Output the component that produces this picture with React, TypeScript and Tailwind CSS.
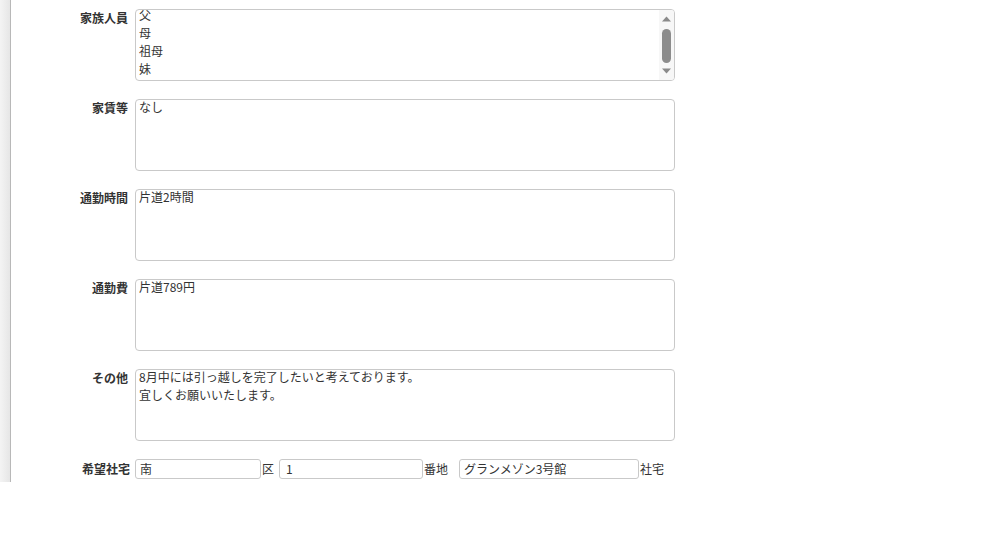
import React from "react";

const font = { fontFamily: '"Noto Sans CJK JP", "Noto Sans", sans-serif' };

const family = ["父", "母", "祖母", "妹", "弟"];

const notes = [
  { label: "家賃等", lines: ["なし"] },
  { label: "通勤時間", lines: ["片道2時間"] },
  { label: "通勤費", lines: ["片道789円"] },
  { label: "その他", lines: ["8月中には引っ越しを完了したいと考えております。", "宜しくお願いいたします。"] },
];

function Label({ children, className = "" }: { children: React.ReactNode; className?: string }) {
  return (
    <div className={"pt-[1px] pr-[1px] text-right text-[12px] font-bold leading-[16px] text-[#333] " + className}>
      {children}
    </div>
  );
}

function ScrollBar() {
  return (
    <div className="flex w-[15px] shrink-0 flex-col items-center bg-[#f7f7f7] pt-[6px]">
      <svg width="9" height="6" viewBox="0 0 9 6">
        <path d="M0 5.5 L4.5 0.5 L9 5.5 Z" fill="#8a8a8a" />
      </svg>
      <div className="mt-[7px] h-[34px] w-[9px] rounded-full bg-[#8c8c8c]" />
      <svg className="mt-[5px]" width="9" height="6" viewBox="0 0 9 6">
        <path d="M0 0.5 L4.5 5.5 L9 0.5 Z" fill="#8a8a8a" />
      </svg>
    </div>
  );
}

export default function App() {
  return (
    <div className="h-[550px] w-full bg-white text-[#333]" style={font}>
      <div className="flex h-[482px]">
        <div className="h-full w-[11px] shrink-0 border-r border-[#b8b8b8] bg-gradient-to-r from-[#f4f4f4] to-[#e6e6e6]" />

        <div className="grid grid-cols-[118px_540px] content-start gap-x-[6px] gap-y-[18px] pt-[9px]">
          {/* family list */}
          <Label>家族人員</Label>
          <div className="flex h-[72px] overflow-hidden rounded-[4px] border border-[#c9c9c9] bg-white">
            <div className="flex-1 overflow-hidden pl-[3px] text-[12px] leading-[18px]">
              <div className="-mt-[4px]">
                {family.map((f) => (
                  <div key={f}>{f}</div>
                ))}
              </div>
            </div>
            <ScrollBar />
          </div>

          {notes.map((n) => (
            <React.Fragment key={n.label}>
              <Label>{n.label}</Label>
              <div className="h-[72px] overflow-hidden rounded-[4px] border border-[#c9c9c9] bg-white pl-[3px] text-[12px] leading-[18px]">
                <div className="-mt-[2px]">
                  {n.lines.map((l) => (
                    <div key={l}>{l}</div>
                  ))}
                </div>
              </div>
            </React.Fragment>
          ))}

          {/* desired housing */}
          <Label className="-mr-[2px] pt-[2px]">希望社宅</Label>
          <div className="flex items-center text-[12px] leading-[18px]">
            <div className="h-[20px] w-[126px] rounded-[3px] border border-[#c9c9c9] px-[4px] leading-[17px]">南</div>
            <span className="ml-[1px] w-[17px]">区</span>
            <div className="h-[20px] w-[144px] rounded-[3px] border border-[#c9c9c9] px-[6px] leading-[17px]">1</div>
            <span className="ml-[1px] w-[35px]">番地</span>
            <div className="h-[20px] w-[180px] rounded-[3px] border border-[#c9c9c9] px-[4px] leading-[17px]">グランメゾン3号館</div>
            <span className="ml-[1px]">社宅</span>
          </div>
        </div>
      </div>
    </div>
  );
}
